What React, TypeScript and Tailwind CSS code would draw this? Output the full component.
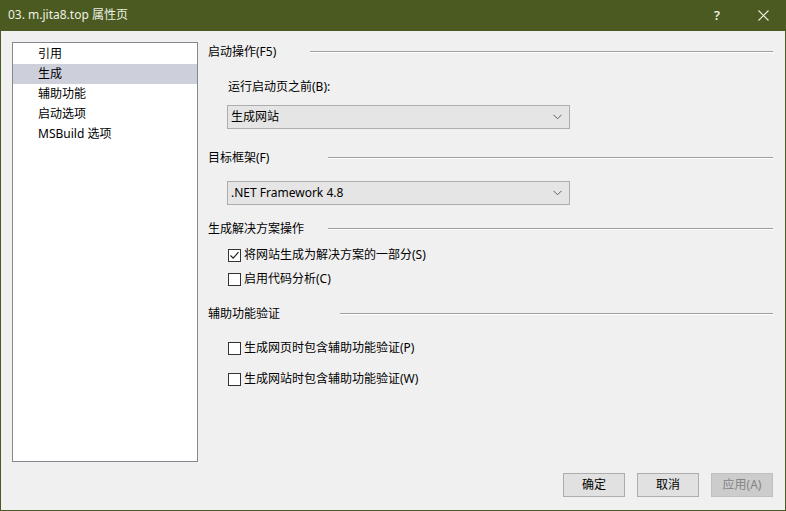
const font = { fontFamily: '"Noto Sans", "Noto Sans CJK SC", sans-serif' };

function Heading({ label, lineStart }: { label: string; lineStart: string }) {
  return (
    <div className="flex h-[16px] items-center">
      <span className={`${lineStart} shrink-0 leading-[16px]`}>{label}</span>
      <div className="flex-1">
        <div className="h-px bg-[#a0a0a0]" />
        <div className="h-px bg-white" />
      </div>
    </div>
  );
}

function Select({ value }: { value: string }) {
  return (
    <div className="ml-[19px] flex h-[24px] w-[343px] items-center justify-between border border-[#adadad] bg-[#e5e5e5] pl-[3px] pr-[7px]">
      <span className="leading-[16px]">{value}</span>
      <svg width="9" height="6" viewBox="0 0 9 6">
        <path d="M0.5 0.8 L4.5 4.8 L8.5 0.8" fill="none" stroke="#606060" strokeWidth="1" />
      </svg>
    </div>
  );
}

function Check({ label, checked }: { label: string; checked?: boolean }) {
  return (
    <div className="ml-[20px] flex h-[16px] items-center">
      <div className="flex h-[13px] w-[13px] items-center justify-center border border-[#333333] bg-white">
        {checked && (
          <svg width="11" height="11" viewBox="0 0 11 11">
            <path d="M1.5 5.5 L4.2 8.2 L9.5 2.2" fill="none" stroke="#222" strokeWidth="1.2" />
          </svg>
        )}
      </div>
      <span className="ml-[3px] leading-[16px]">{label}</span>
    </div>
  );
}

function Button({ label, disabled }: { label: string; disabled?: boolean }) {
  return (
    <button
      className={`h-[24px] w-[62px] border text-[12px] ${
        disabled ? 'border-[#bfbfbf] bg-[#cccccc] text-[#838383]' : 'border-[#adadad] bg-[#e1e1e1] text-black'
      }`}
      style={font}
    >
      {label}
    </button>
  );
}

export default function App() {
  const items = ['引用', '生成', '辅助功能', '启动选项', 'MSBuild 选项'];

  return (
    <div className="flex h-[511px] w-[786px] flex-col bg-[#4a5a20] text-[12px] text-black" style={font}>
      {/* Title bar */}
      <div className="flex h-[31px] shrink-0 items-center text-[#eef0e2]">
        <span className="ml-[8px] flex-1 pb-[1px]">03. m.jita8.top 属性页</span>
        <div className="flex h-full w-[46px] items-center justify-center text-[13px] font-semibold">?</div>
        <div className="flex h-full w-[46px] items-center justify-center">
          <svg width="11" height="11" viewBox="0 0 11 11">
            <path d="M0.5 0.5 L10.5 10.5 M10.5 0.5 L0.5 10.5" stroke="#eef0e2" strokeWidth="1.1" />
          </svg>
        </div>
      </div>

      {/* Body */}
      <div className="mx-px mb-px flex flex-1 flex-col bg-[#f0f0f0] pl-[11px] pr-[12px] pt-[11px]">
        <div className="flex">
          <div className="h-[420px] w-[186px] shrink-0 border border-[#828790] bg-white pt-px">
            {items.map((it, i) => (
              <div key={it} className={`flex h-[20px] items-center pl-[25px] ${i === 1 ? 'bg-[#cdcfdb]' : ''}`}>
                <span>{it}</span>
              </div>
            ))}
          </div>

          <div className="ml-[10px] flex flex-1 flex-col">
            <div className="mt-[2px]">
              <Heading label="启动操作(F5)" lineStart="w-[102px]" />
            </div>
            <div className="ml-[20px] mt-[19px] h-[16px] leading-[16px]">运行启动页之前(B):</div>
            <div className="mt-[10px]">
              <Select value="生成网站" />
            </div>
            <div className="mt-[21px]">
              <Heading label="目标框架(F)" lineStart="w-[120px]" />
            </div>
            <div className="mt-[15px]">
              <Select value=".NET Framework 4.8" />
            </div>
            <div className="mt-[16px]">
              <Heading label="生成解决方案操作" lineStart="w-[120px]" />
            </div>
            <div className="mt-[10px]">
              <Check label="将网站生成为解决方案的一部分(S)" checked />
            </div>
            <div className="mt-[8px]">
              <Check label="启用代码分析(C)" />
            </div>
            <div className="mt-[19px]">
              <Heading label="辅助功能验证" lineStart="w-[132px]" />
            </div>
            <div className="mt-[18px]">
              <Check label="生成网页时包含辅助功能验证(P)" />
            </div>
            <div className="mt-[15px]">
              <Check label="生成网站时包含辅助功能验证(W)" />
            </div>
          </div>
        </div>

        <div className="mt-[11px] flex justify-end gap-[12px]">
          <Button label="确定" />
          <Button label="取消" />
          <Button label="应用(A)" disabled />
        </div>
      </div>
    </div>
  );
}
